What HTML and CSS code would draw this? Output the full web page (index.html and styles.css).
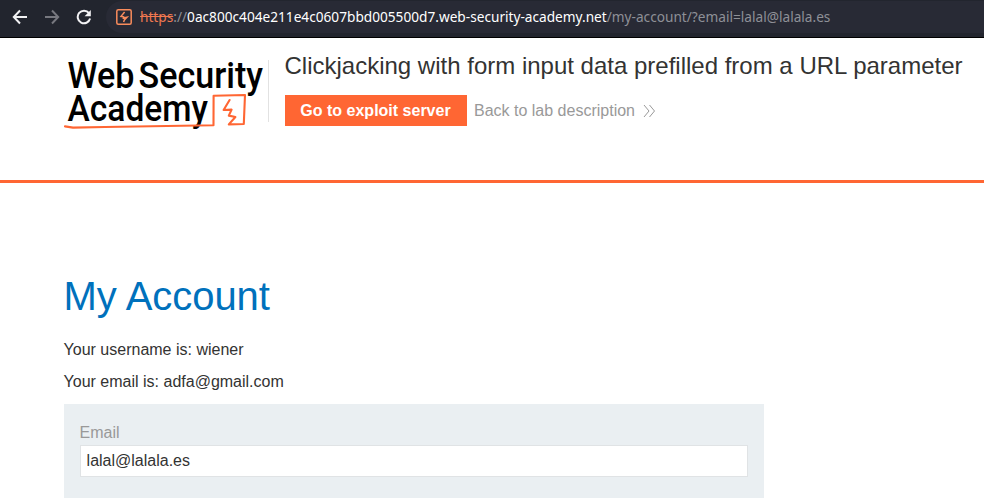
FILE: index.html
```html
<!DOCTYPE html>
<html lang="en">
<head>
<meta charset="utf-8">
<title>Clickjacking with form input data prefilled from a URL parameter</title>
<link rel="stylesheet" href="styles.css">
</head>
<body>
<nav class="toolbar">
  <svg class="nav-icon" viewBox="0 0 16 16"><path d="M15 8H2M8 1.5L1.8 8L8 14.5"/></svg>
  <svg class="nav-icon disabled" viewBox="0 0 16 16"><path d="M1 8H14M8 1.5L14.2 8L8 14.5"/></svg>
  <svg class="nav-icon reload" viewBox="0 0 16 16"><path d="M13 4.1A6.3 6.3 0 1 0 14.1 9.6"/><path class="solid" d="M14.8 1V7.2H8.6Z"/></svg>
  <div class="address">
    <svg class="site-icon" viewBox="0 0 16 16"><rect x=".8" y=".8" width="14.4" height="14.4" rx="1.5"/><path d="M8.6 3L5 7.4L7.6 7.8L7.4 9L11 8.2L8.4 11L7.6 13"/></svg>
    <span class="url"><span class="scheme">https</span>://<span class="host">0ac800c404e211e4c0607bbd005500d7.web-security-academy.net</span>/my-account/?email=lalal@lalala.es</span>
  </div>
</nav>
<header class="lab-header">
  <svg class="logo" viewBox="0 0 200 74">
    <g class="logo-text">
      <text x="2.5" y="31.3" textLength="67" lengthAdjust="spacingAndGlyphs">Web</text>
      <text x="73.5" y="31.3" textLength="124.5" lengthAdjust="spacingAndGlyphs">Security</text>
      <text x="2.5" y="64" textLength="140.5" lengthAdjust="spacingAndGlyphs">Academy</text>
    </g>
    <g class="logo-mark">
      <path d="M0 69.4L8 70.6L40 70L148.5 68.2L148.6 38.8L180 38L178.8 67L163.8 67.4L170.4 60L163.8 58.6L166.6 52.6L158.6 53L164.6 43"/>
    </g>
  </svg>
  <div class="title-block">
    <h2>Clickjacking with form input data prefilled from a URL parameter</h2>
    <div class="actions">
      <a class="button">Go to exploit server</a>
      <a class="back">Back to lab description<svg viewBox="0 0 13 14"><path d="M1 1L6 7L1 13M6.5 1L11.5 7L6.5 13"/></svg></a>
    </div>
  </div>
</header>
<main>
  <h1>My Account</h1>
  <p>Your username is: wiener</p>
  <p>Your email is: adfa@gmail.com</p>
  <form>
    <label for="email">Email</label>
    <input id="email" type="text" value="lalal@lalala.es">
  </form>
</main>
</body>
</html>
```
FILE: styles.css
```css
* { box-sizing: border-box; }
body {
  margin: 0;
  height: 498px;
  overflow: hidden;
  background: #fff;
  color: #333332;
  font: 16px/20px "Liberation Sans", Arial, sans-serif;
}
.toolbar {
  display: flex;
  height: 38px;
  padding: 1px 0 0 12px;
  background: #22252e;
  border-bottom: 1px solid #000;
}
.nav-icon {
  width: 16px;
  height: 16px;
  margin: 8px 16px 0 0;
  fill: none;
  stroke: #f2f2f4;
  stroke-width: 2;
}
.nav-icon.disabled { stroke: #77787f; }
.nav-icon.reload { margin-right: 14px; }
.nav-icon .solid { fill: #f2f2f4; stroke: none; }
.address {
  display: flex;
  flex: 1;
  height: 32px;
  padding-left: 10px;
  border-radius: 16px 0 0 16px;
  background: #282a35;
}
.site-icon {
  width: 16px;
  height: 16px;
  margin: 8px 8px 0 0;
  fill: none;
  stroke: #f98c5c;
  stroke-width: 1.5;
}
.url {
  color: #8e9097;
  font: 13.66px/32px "Noto Sans", sans-serif;
  white-space: nowrap;
}
.scheme { color: #f07850; text-decoration: line-through; }
.host { color: #fff; }
.lab-header {
  display: flex;
  height: 145px;
  padding: 12px 0 0 65px;
  border-bottom: 3px solid #ff6633;
}
.logo { width: 200px; height: 74px; margin-top: 7px; flex: none; overflow: visible; }
.logo-text { fill: #000; font: 500 37.5px Roboto, sans-serif; }
.logo-mark { fill: none; stroke: #ff6633; stroke-width: 2.1; stroke-linejoin: round; stroke-linecap: round; }
.title-block {
  position: relative;
  margin-left: 3px;
  padding-left: 16.5px;
}
.title-block::before {
  content: "";
  position: absolute;
  left: 0;
  top: 10px;
  height: 62px;
  border-left: 1px solid #e2e2e2;
}
h2 { margin: 0; font-size: 24px; line-height: 32px; font-weight: 400; white-space: nowrap; }
.actions { display: flex; margin-top: 13px; line-height: 31px; }
.button { width: 182px; height: 31px; background: #ff6633; color: #fff; font-weight: 700; text-align: center; }
.back { margin-left: 7.5px; color: #999; }
.back svg { width: 13px; height: 14px; margin-left: 8px; vertical-align: -2px; fill: none; stroke: #999; stroke-width: 1; }
main { padding: 90px 0 0 63.6px; }
h1 { margin: 0 0 20px; color: #0071bc; font-size: 40px; line-height: 47px; font-weight: 400; letter-spacing: -.05px; }
p { margin: 0 0 12px; line-height: 20px; }
form { width: 700px; height: 110px; padding: 18px 16px; background: #eaeff2; }
label { display: block; height: 23px; color: #999; line-height: 21px; }
input {
  display: block;
  width: 668px;
  height: 32px;
  padding: 0 6px;
  border: 1px solid #e0e3e5;
  background: #fff;
  color: #333332;
  font: 16px "Liberation Sans", Arial, sans-serif;
}
```
